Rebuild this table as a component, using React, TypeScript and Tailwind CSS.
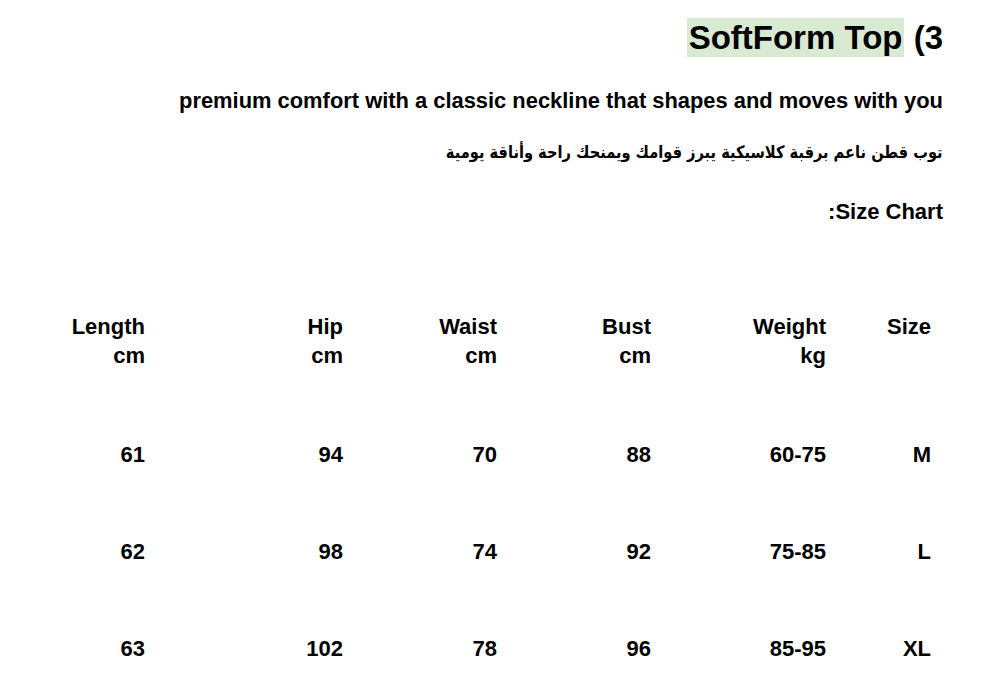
const headers = [
  { top: "Length", bottom: "cm" },
  { top: "Hip", bottom: "cm" },
  { top: "Waist", bottom: "cm" },
  { top: "Bust", bottom: "cm" },
  { top: "Weight", bottom: "kg" },
  { top: "Size", bottom: "" },
];

const rows = [
  ["61", "94", "70", "88", "60-75", "M"],
  ["62", "98", "74", "92", "75-85", "L"],
  ["63", "102", "78", "96", "85-95", "XL"],
];

const App = () => {
  return (
    <div className="min-h-[687px] w-[1000px] bg-white text-black font-bold font-['Liberation_Sans',Arial,sans-serif]">
      <div className="flex flex-col items-end pr-[57px] pt-[19px]">
        {/* Title */}
        <h1 className="text-[33px] leading-[37px]">
          <span className="bg-[#d9ead3] px-[2px] py-[1px]">SoftForm Top</span> (3
        </h1>

        <p className="mt-[32px] text-[21.9px] leading-[25px]">
          premium comfort with a classic neckline that shapes and moves with you
        </p>

        <p
          dir="rtl"
          className="mt-[27px] text-[17px] leading-[25px] origin-right scale-x-[0.86] font-['DejaVu_Sans',sans-serif]"
        >
          توب قطن ناعم برقبة كلاسيكية يبرز قوامك ويمنحك راحة وأناقة يومية
        </p>

        <p className="mt-[34px] text-[22px] leading-[25px]">:Size Chart</p>
      </div>

      {/* Size table */}
      <div className="mt-[88px] grid grid-cols-[88px_198px_154px_154px_175px_105px] pl-[57px] text-right text-[22px] leading-[29px] gap-y-[68px]">
        {headers.map((h) => (
          <div key={h.top} className="mb-[2px]">
            <div>{h.top}</div>
            <div className="h-[29px]">{h.bottom}</div>
          </div>
        ))}
        {rows.map((r, i) =>
          r.map((cell, j) => <div key={`${i}-${j}`}>{cell}</div>)
        )}
      </div>
    </div>
  );
};

export default App;
